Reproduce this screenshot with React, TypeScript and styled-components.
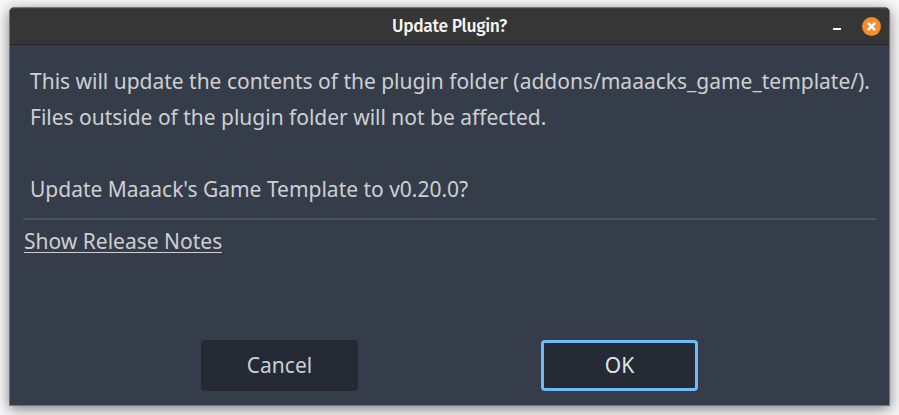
import React from "react";
import styled, { createGlobalStyle } from "styled-components";

const GlobalStyle = createGlobalStyle`
  * { box-sizing: border-box; }
  body { margin: 0; background: #f4f4f4; overflow: hidden; }
`;

const Desktop = styled.div`
  width: 899px;
  height: 415px;
  padding: 7px 9px 9px 9px;
  background: #f8f8f8;
`;

const Dialog = styled.section`
  width: 881px;
  height: 399px;
  display: flex;
  flex-direction: column;
  border-radius: 5px 5px 0 0;
  border: 1px solid #70747a;
  background: #363d4a;
  box-shadow: 0 3px 14px rgba(0, 0, 0, 0.5);
  overflow: hidden;
  font-family: "Noto Sans", sans-serif;
`;

const TitleBar = styled.header`
  height: 37px;
  flex: none;
  display: grid;
  grid-template-columns: 1fr auto 1fr;
  align-items: center;
  padding-bottom: 1px;
  background: #363636;
  border-top: 1px solid #424242;
  border-bottom: 1px solid #232529;
`;

const Title = styled.h1`
  grid-column: 2;
  margin: 0;
  padding-top: 2px;
  font: 500 17.5px/20px "Fira Sans", "Open Sans", sans-serif;
  letter-spacing: -0.35px;
  color: #f6f5f4;
`;

const Controls = styled.div`
  display: flex;
  justify-content: flex-end;
  align-items: center;
  gap: 20.5px;
  padding-right: 8.5px;
`;

const MinimizeIcon = styled.span`
  width: 8px;
  height: 2px;
  margin-top: 6px;
  background: #fff;
`;

const CloseIcon = styled.svg`
  display: block;
  width: 19px;
  height: 19px;
`;

const Content = styled.div`
  flex: 1;
  display: flex;
  flex-direction: column;
  padding: 18px 13px 14px;
`;

const Message = styled.p`
  margin: 0;
  padding-left: 7px;
  font-size: 21px;
  line-height: 36px;
  letter-spacing: -0.012px;
  color: #cdcfd2;
  white-space: pre;
`;

const Divider = styled.hr`
  width: 853px;
  height: 2px;
  margin: 11px 0 0;
  border: 0;
  background: #4b515d;
`;

const NotesLink = styled.a`
  align-self: flex-start;
  margin: 4px 0 0 1px;
  height: 29px;
  font-size: 21px;
  line-height: 34px;
  color: #cdcfd2;
  border-bottom: 1px solid #cdcfd2;
`;

const Actions = styled.div`
  margin-top: auto;
  display: flex;
  gap: 183px;
  padding-left: 178px;
`;

const Button = styled.button<{ $focused?: boolean }>`
  width: 157px;
  height: 51px;
  padding: 0 0 1px;
  border: ${(p) => (p.$focused ? "3px solid #70bafa" : "0")};
  border-radius: 4px;
  background: #252b34;
  color: ${(p) => (p.$focused ? "#e2e3e4" : "#cdcfd2")};
  font: 21px "Noto Sans", sans-serif;
`;

export default function App() {
  return (
    <Desktop>
      <GlobalStyle />
      <Dialog>
        <TitleBar>
          <Title>Update Plugin?</Title>
          <Controls>
            <MinimizeIcon />
            <CloseIcon viewBox="0 0 19 19" aria-label="Close">
              <circle cx="9.5" cy="9.5" r="9.4" fill="#f58d2b" />
              <path d="M5.9 5.9l7.2 7.2M13.1 5.9l-7.2 7.2" stroke="#fff" strokeWidth="2.4" />
            </CloseIcon>
          </Controls>
        </TitleBar>
        <Content>
          <Message>{"This will update the contents of the plugin folder (addons/maaacks_game_template/).\nFiles outside of the plugin folder will not be affected.\n\nUpdate Maaack's Game Template to v0.20.0?"}</Message>
          <Divider />
          <NotesLink>Show Release Notes</NotesLink>
          <Actions>
            <Button>Cancel</Button>
            <Button $focused>OK</Button>
          </Actions>
        </Content>
      </Dialog>
    </Desktop>
  );
}
